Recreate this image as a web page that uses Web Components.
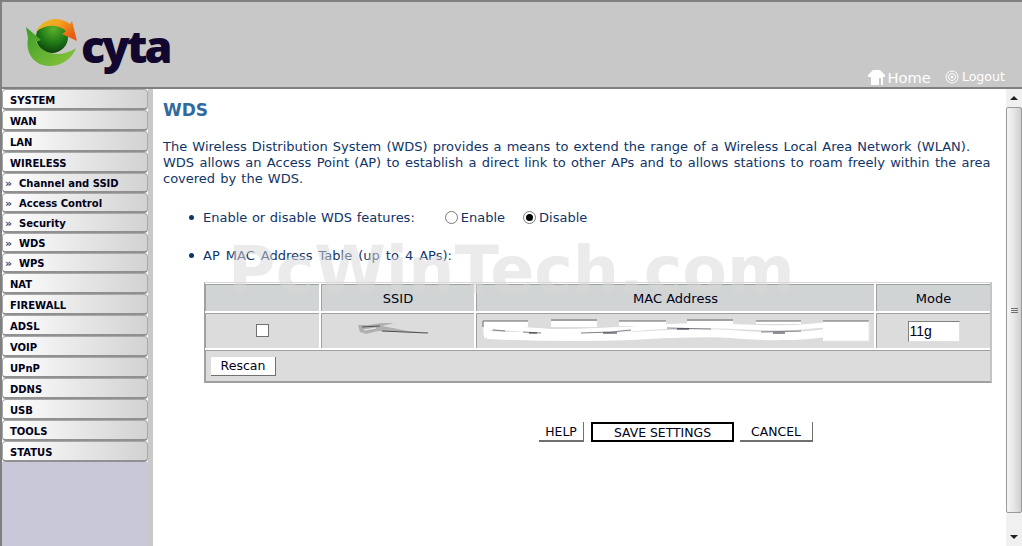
<!DOCTYPE html>
<html>
<head>
<meta charset="utf-8">
<title>WDS</title>
<style>
  html, body { height: 100%; margin: 0; overflow: hidden; background: #fff; }
  body { font-family: "DejaVu Sans", Verdana, sans-serif; }
</style>
</head>
<body>
<router-app></router-app>

<script>
class RouterHeader extends HTMLElement {
  constructor() {
    super();
    this.attachShadow( {mode: 'open'} ).innerHTML = `
      <style>
        :host {
          align-items: flex-start;
          background: #c8c8c8;
          border-bottom: solid 2px #808080;
          border-left: solid 2px #808080;
          border-top: solid 2px #808080;
          box-sizing: border-box;
          display: flex;
          flex-direction: row;
          height: 89px;
          justify-content: space-between;
          padding: 15px 17px 0 24px;
        }
        .logo { align-items: flex-start; display: flex; flex-direction: row; }
        .word {
          color: #12072e;
          font-family: "Open Sans", sans-serif;
          font-size: 45px;
          font-weight: 800;
          letter-spacing: -3px;
          line-height: 46px;
          margin: 6px 0 0 3px;
        }
        nav {
          align-items: center;
          align-self: flex-end;
          color: #fff;
          display: flex;
          flex-direction: row;
          margin-bottom: 1px;
        }
        a { align-items: center; display: flex; flex-direction: row; }
        .home { font-size: 14.7px; gap: 3px; margin-right: 14px; }
        .logout { font-size: 12.6px; gap: 3px; margin-bottom: 2px; }
      </style>
      <div class="logo">
        <svg width="52" height="50" viewBox="0 0 52 50">
          <defs>
            <radialGradient id="globe" cx="0.55" cy="0.25" r="0.8">
              <stop offset="0" stop-color="#5cb02c"/>
              <stop offset="0.55" stop-color="#1f7a16"/>
              <stop offset="1" stop-color="#0a3a08"/>
            </radialGradient>
            <linearGradient id="orange" x1="0" y1="0" x2="1" y2="0.6">
              <stop offset="0" stop-color="#dcc82c"/>
              <stop offset="0.5" stop-color="#f4a020"/>
              <stop offset="1" stop-color="#e85c14"/>
            </linearGradient>
            <linearGradient id="green" x1="0" y1="0" x2="1" y2="1">
              <stop offset="0" stop-color="#3c9c28"/>
              <stop offset="1" stop-color="#8cc63c"/>
            </linearGradient>
          </defs>
          <circle cx="26" cy="20" r="16" fill="url(#globe)"/>
          <path fill="url(#orange)" d="M10 15C15 3 31 -3 44 7L46 4L51 24L36 17L40 14C30 6 18 8 10 15Z"/>
          <path fill="url(#green)" d="M0 10L15 23L10 25C15 35 32 43 50 31C46 43 33 50 22 49C8 48 -1 36 2 21Z"/>
        </svg>
        <span class="word">cyta</span>
      </div>
      <nav>
        <a class="home">
          <svg width="17" height="17" viewBox="0 0 17 17"><path fill="#fff" d="M0 6L5 1H12L17 6V8H15V16H13V9H11V16H3V8H0Z"/></svg>
          <span>Home</span>
        </a>
        <a class="logout">
          <svg width="14" height="14" viewBox="0 0 14 14" fill="none" stroke="#fff"><circle cx="7" cy="7" r="6"/><circle cx="7" cy="7" r="3.5"/><circle cx="7" cy="7" r="1" fill="#fff"/></svg>
          <span>Logout</span>
        </a>
      </nav>
    `;
  }
}

class MenuItem extends HTMLElement {
  constructor() {
    super();
    this.attachShadow( {mode: 'open'} ).innerHTML = `
      <style>
        :host {
          align-items: center;
          background: linear-gradient( to right, #ffffff, #d2d2d2 );
          border: solid 1px #a8a8a8;
          border-bottom: solid 2px #909090;
          border-radius: 4px;
          box-sizing: border-box;
          color: #000018;
          display: flex;
          flex-direction: row;
          font-family: "DejaVu Sans", sans-serif;
          font-size: 10px;
          font-weight: 700;
          height: 21px;
          padding: 3px 0 0 7px;
          width: 146px;
        }
        :host( [sub] ) { height: 20px; padding: 1px 0 0 2px; }
        i { color: #3a4a70; display: none; font-size: 11px; font-style: normal; font-weight: 700; width: 14px; }
        :host( [sub] ) i { display: inline; }
      </style>
      <i>»</i><slot></slot>
    `;
  }
}

class SideBar extends HTMLElement {
  constructor() {
    super();
    this.attachShadow( {mode: 'open'} ).innerHTML = `
      <style>
        :host {
          background: #c8c8d8;
          border-left: solid 2px #808080;
          border-right: solid 5px #c8c8c8;
          box-sizing: border-box;
          display: flex;
          flex-direction: column;
          flex: none;
          width: 153px;
        }
        .items { background: #fff; display: flex; flex-direction: column; }
      </style>
      <div class="items"><slot></slot></div>
    `;
  }
}

class ScrollBar extends HTMLElement {
  constructor() {
    super();
    this.attachShadow( {mode: 'open'} ).innerHTML = `
      <style>
        :host {
          background: #f0f0f0;
          box-sizing: border-box;
          display: flex;
          flex-direction: column;
          flex: none;
          width: 16px;
        }
        .arrow { align-items: center; display: flex; flex: none; height: 18px; justify-content: center; }
        .thumb {
          align-items: center;
          background: linear-gradient( to right, #f4f4f4, #e6e6e6 50%, #cfcfcf );
          border: solid 1px #9a9a9a;
          border-radius: 2px;
          box-sizing: border-box;
          display: flex;
          flex: none;
          height: 406px;
          justify-content: center;
        }
        .track { flex: 1; }
        .grip { border-bottom: solid 1px #707070; border-top: solid 1px #707070; height: 3px; position: relative; width: 7px; }
        .grip::after { border-top: solid 1px #707070; content: ''; left: 0; position: absolute; right: 0; top: 1px; }
        .tri { border-left: solid 4px transparent; border-right: solid 4px transparent; height: 0; width: 0; }
        .up { border-bottom: solid 4px #202020; }
        .down { border-top: solid 4px #202020; }
      </style>
      <div class="arrow"><div class="tri up"></div></div>
      <div class="thumb"><div class="grip"></div></div>
      <div class="track"></div>
      <div class="arrow"><div class="tri down"></div></div>
    `;
  }
}

class BulletRow extends HTMLElement {
  constructor() {
    super();
    this.attachShadow( {mode: 'open'} ).innerHTML = `
      <style>
        :host {
          align-items: center;
          display: flex;
          flex-direction: row;
          height: 16px;
          padding-left: 26px;
          word-spacing: 0.5px;
        }
        b { background: #0f3468; border-radius: 50%; flex: none; height: 5px; margin-right: 9px; width: 5px; }
      </style>
      <b></b><slot></slot>
    `;
  }
}

class RadioOption extends HTMLElement {
  constructor() {
    super();
    this.attachShadow( {mode: 'open'} ).innerHTML = `
      <style>
        :host { align-items: center; display: inline-flex; flex-direction: row; gap: 3px; }
        span {
          background: #fff;
          border: solid 1px #7a7a7a;
          border-radius: 50%;
          box-sizing: border-box;
          display: flex;
          align-items: center;
          justify-content: center;
          height: 13px;
          width: 13px;
        }
        :host( [checked] ) span::after { background: #000; border-radius: 50%; content: ''; height: 7px; width: 7px; }
      </style>
      <span></span><slot></slot>
    `;
  }
}

class FormButton extends HTMLElement {
  constructor() {
    super();
    this.attachShadow( {mode: 'open'} ).innerHTML = `
      <style>
        :host {
          align-items: center;
          background: #fff;
          border-bottom: solid 2px #707070;
          border-right: solid 1px #707070;
          box-sizing: border-box;
          color: #000018;
          display: flex;
          font-family: "DejaVu Sans", sans-serif;
          font-size: 12.4px;
          height: 20px;
          justify-content: center;
        }
        :host( [primary] ) { border: solid 2px #000; }
      </style>
      <slot></slot>
    `;
  }
}

class MacTable extends HTMLElement {
  constructor() {
    super();
    this.attachShadow( {mode: 'open'} ).innerHTML = `
      <style>
        :host {
          border-bottom: solid 2px #a0a0a0;
          border-left: solid 1px #a0a0a0;
          border-right: solid 2px #c4c4c4;
          border-top: solid 1px #d8d8d8;
          box-sizing: border-box;
          color: #000018;
          display: grid;
          font-size: 13px;
          gap: 2px;
          grid-template-columns: 114px 153px 398px 114px;
          grid-template-rows: 27px 35px 31px;
          margin: 0 0 0 41px;
          padding: 1px 0 0 0;
          width: 788px;
        }
        div {
          align-items: center;
          background: #dcdcdc;
          border-left: solid 1px #a0a0a0;
          border-top: solid 1px #a0a0a0;
          box-sizing: border-box;
          display: flex;
          justify-content: center;
          min-width: 0;
        }
        .head { background: #d0d4d4; }
        .box { background: #fff; border: solid 1px #707070; box-sizing: border-box; height: 13px; margin-bottom: 2px; width: 13px; }
        .wide { grid-column: 1 / 5; justify-content: flex-start; padding-left: 5px; }
        .ssid { margin: 0 8px 4px 0; }
        .mode {
          background: #fff;
          border: solid 1px #808080;
          border-bottom-color: #e0e0e0;
          border-right-color: #e0e0e0;
          box-sizing: border-box;
          font-family: "Liberation Sans", sans-serif;
          font-size: 14px;
          height: 21px;
          line-height: 19px;
          padding-left: 1px;
          width: 52px;
        }
        .rescan {
          background: #fff;
          border-bottom: solid 1px #707070;
          border-right: solid 1px #707070;
          box-sizing: border-box;
          font-family: "DejaVu Sans", sans-serif;
          font-size: 12.5px;
          height: 19px;
          line-height: 18px;
          text-align: center;
          width: 65px;
        }
      </style>
      <div class="head"></div>
      <div class="head">SSID</div>
      <div class="head">MAC Address</div>
      <div class="head">Mode</div>
      <div><span class="box"></span></div>
      <div>
        <svg class="ssid" width="73" height="12" viewBox="0 0 73 12">
          <path fill="#b0b0b0" d="M0 2L10 2L24 0L36 0L24 3L50 8L73 10L40 9L20 8L8 11L2 9Z"/>
          <path fill="none" stroke="#505050" d="M24 8L70 10M4 4L22 3"/>
          <path fill="none" stroke="#f0f0f0" d="M6 7L18 5"/>
        </svg>
      </div>
      <div>
        <svg width="390" height="24" viewBox="0 0 390 24">
          <path fill="#fff" d="M2 2H47V8H2ZM70 2H116V8H70ZM138 2H185V7H138ZM206 2H252V5H206ZM275 2H320V5H275ZM342 2H388V22H342Z"/>
          <path fill="#fff" d="M3 6L14 6L4 20C2 16 2 10 3 6Z"/>
          <path fill="none" stroke="#fff" stroke-width="5" d="M5 7C20 8 40 11 64 12C80 14 120 11 150 10C170 8 200 6 240 7C270 8 300 11 344 6"/>
          <path fill="none" stroke="#fff" stroke-width="8" d="M6 16C50 18 100 19 150 17C190 15 220 13 250 15C280 18 320 18 345 14"/>
          <path fill="none" stroke="#666" d="M2 2H47M70 1H116M138 2H185M206 1H252M275 2H320M342 2H388M2 2V8"/>
          <path fill="none" stroke="#e8e8e8" d="M388 2V22H342"/>
          <path fill="none" stroke="#808088" d="M12 11L24 12M42 13L60 14M100 14L130 13L150 11M186 9L230 10M280 13L320 12"/>
          <path fill="none" stroke="#282838" d="M48 14H56M122 14H136M196 10H208M292 14H304"/>
        </svg>
      </div>
      <div><span class="mode">11g</span></div>
      <div class="wide"><span class="rescan">Rescan</span></div>
    `;
  }
}

class WdsPage extends HTMLElement {
  constructor() {
    super();
    this.attachShadow( {mode: 'open'} ).innerHTML = `
      <style>
        :host {
          box-sizing: border-box;
          color: #0f3468;
          display: flex;
          flex-direction: column;
          flex: 1;
          font-family: "DejaVu Sans", sans-serif;
          font-size: 13px;
          min-width: 0;
          padding: 11px 0 0 10px;
          position: relative;
        }
        h1 { color: #336a9e; font-size: 17px; font-weight: 700; line-height: 20px; margin: 0 0 19px 0; }
        p { line-height: 16px; margin: 0 0 22px 0; white-space: nowrap; word-spacing: 1px; }
        p span { word-spacing: 1.2px; }
        .radios { display: inline-flex; flex-direction: row; gap: 18px; margin-left: 30px; }
        .wider { word-spacing: 1.9px; }
        bullet-row:last-of-type { margin-top: 22px; margin-bottom: 19px; }
        .actions { display: flex; flex-direction: row; gap: 6px; margin: 39px 0 0 376px; }
        .actions form-button:first-child { margin-right: 1px; }
        .watermark {
          color: rgba( 215, 215, 215, 0.5 );
          font-family: "DejaVu Sans", sans-serif;
          font-size: 65px;
          font-weight: 700;
          left: 75px;
          line-height: 60px;
          pointer-events: none;
          position: absolute;
          top: 152px;
          white-space: nowrap;
        }
      </style>
      <h1>WDS</h1>
      <p>The Wireless Distribution System (WDS) provides a means to extend the range of a Wireless Local Area Network (WLAN).<br><span>WDS allows an Access Point (AP) to establish a direct link to other APs and to allows stations to roam freely within the area</span><br>covered by the WDS.</p>
      <bullet-row>
        Enable or disable WDS features:
        <span class="radios">
          <radio-option>Enable</radio-option>
          <radio-option checked>Disable</radio-option>
        </span>
      </bullet-row>
      <bullet-row><span class="wider">AP MAC Address Table (up to 4 APs):</span></bullet-row>
      <mac-table></mac-table>
      <div class="actions">
        <form-button style="width:45px">HELP</form-button>
        <form-button primary style="width:143px">SAVE SETTINGS</form-button>
        <form-button style="width:73px">CANCEL</form-button>
      </div>
      <div class="watermark">PcWinTech.com</div>
    `;
  }
}

class RouterApp extends HTMLElement {
  constructor() {
    super();
    const items = [
      ['SYSTEM'], ['WAN'], ['LAN'], ['WIRELESS'],
      ['Channel and SSID', 1], ['Access Control', 1], ['Security', 1], ['WDS', 1], ['WPS', 1],
      ['NAT'], ['FIREWALL'], ['ADSL'], ['VOIP'], ['UPnP'], ['DDNS'], ['USB'], ['TOOLS'], ['STATUS']
    ];
    const menu = items.map( ( item ) => `<menu-item${item[1] ? ' sub' : ''}>${item[0]}</menu-item>` ).join( '' );

    this.attachShadow( {mode: 'open'} ).innerHTML = `
      <style>
        :host { display: flex; flex-direction: column; height: 546px; overflow: hidden; width: 1022px; }
        .main { display: flex; flex: 1; flex-direction: row; min-height: 0; }
      </style>
      <router-header></router-header>
      <div class="main">
        <side-bar>${menu}</side-bar>
        <wds-page></wds-page>
        <scroll-bar></scroll-bar>
      </div>
    `;
  }
}

window.customElements.define( 'router-header', RouterHeader );
window.customElements.define( 'menu-item', MenuItem );
window.customElements.define( 'side-bar', SideBar );
window.customElements.define( 'scroll-bar', ScrollBar );
window.customElements.define( 'bullet-row', BulletRow );
window.customElements.define( 'radio-option', RadioOption );
window.customElements.define( 'form-button', FormButton );
window.customElements.define( 'mac-table', MacTable );
window.customElements.define( 'wds-page', WdsPage );
window.customElements.define( 'router-app', RouterApp );
</script>
</body>
</html>
